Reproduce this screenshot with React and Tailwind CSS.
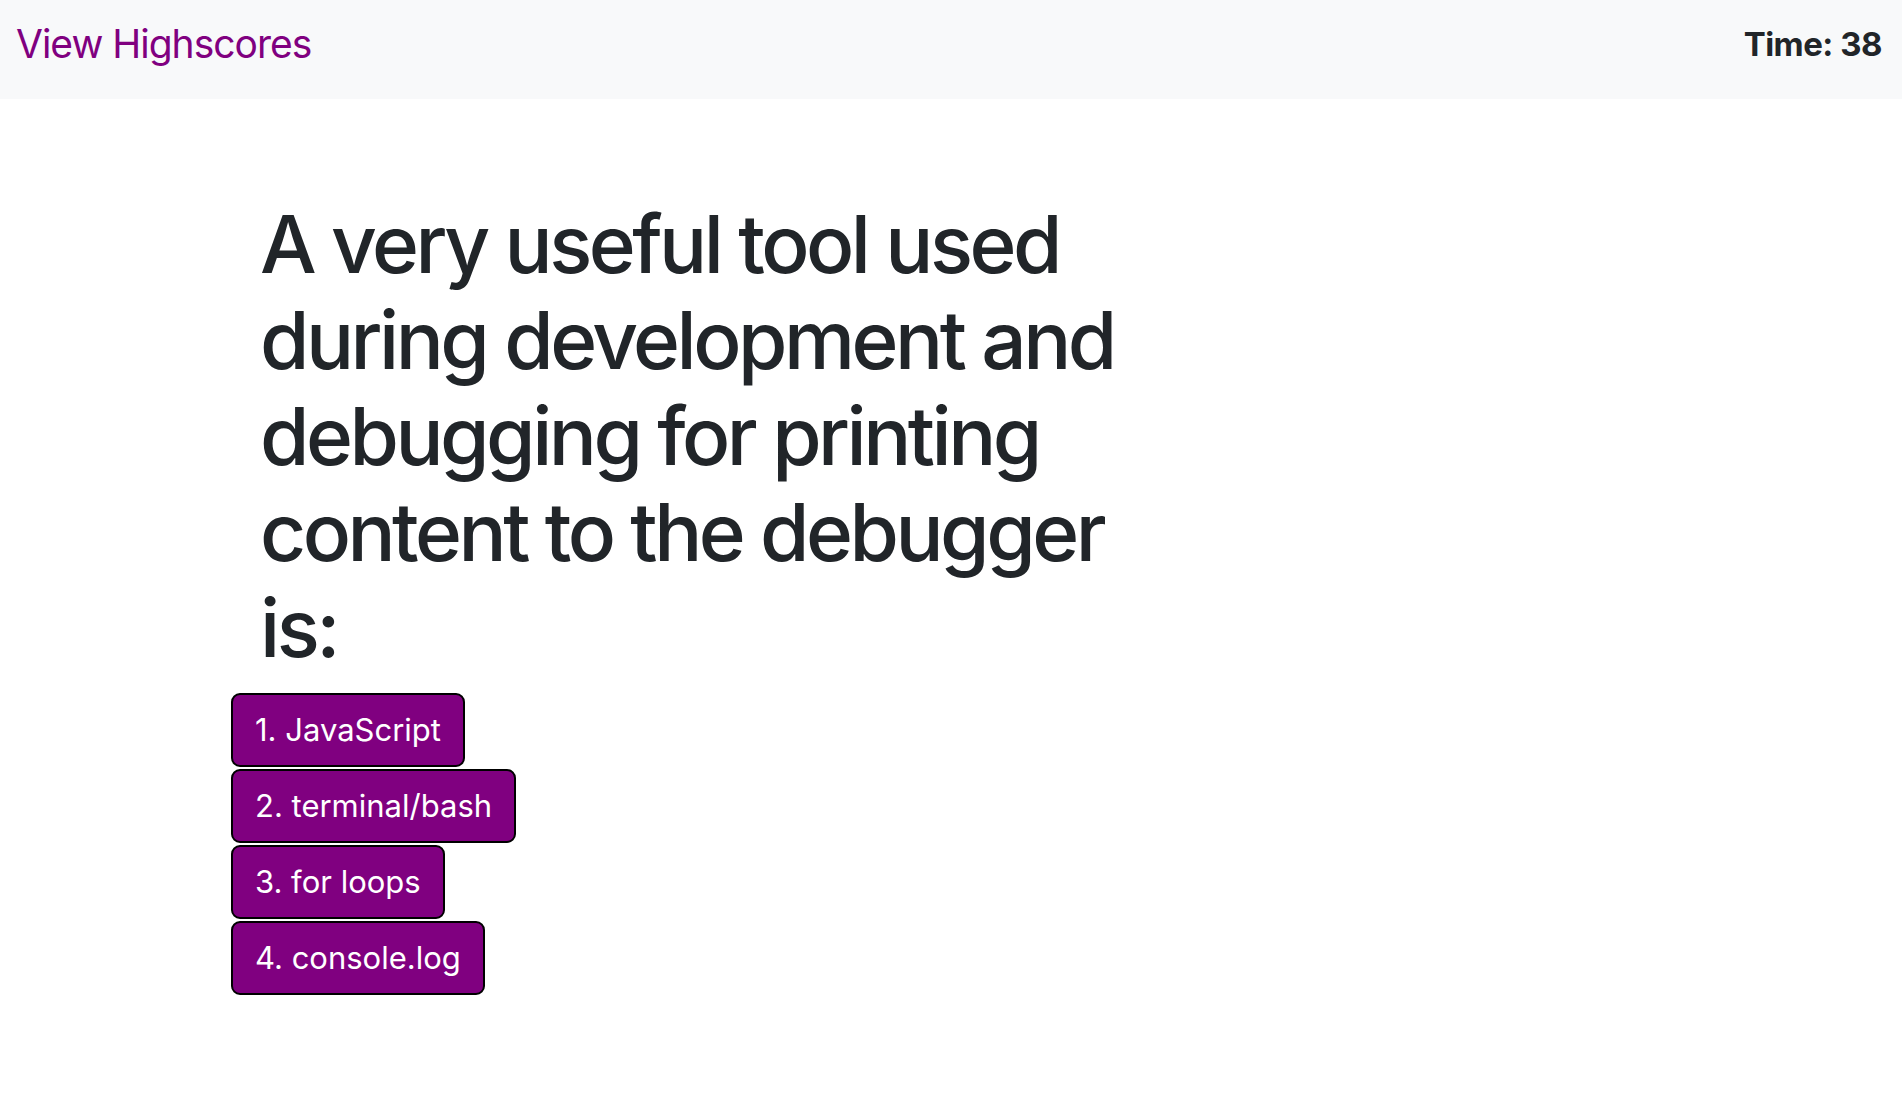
const choices = ["1. JavaScript", "2. terminal/bash", "3. for loops", "4. console.log"];

export default function App() {
    return (
        <div className="min-h-screen bg-white text-[#212529] font-['Inter',sans-serif]">
            <header className="h-[99px] bg-[#f8f9fa] flex items-start justify-between pl-4 pr-[20px] pt-[24px]">
                <a className="text-[39px] leading-none text-[#800080] tracking-[-1px] cursor-pointer">
                    View Highscores
                </a>
                <p className="mt-[4px] text-[33px] font-bold leading-none tracking-[-0.5px]">Time: 38</p>
            </header>

            <main className="pl-[231px] pt-[97px]">
                <h1 className="ml-[29px] w-[900px] text-[80px] leading-[96px] font-medium tracking-[-3.5px]">
                    A very useful tool used during development and debugging for printing content to the debugger is:
                </h1>

                <div className="mt-[17px] flex flex-col items-start gap-[2px]">
                    {choices.map((c) => (
                        <button
                            key={c}
                            className="bg-[#800080] text-white text-[31px] leading-[48px] px-[22px] py-[11px] border-2 border-black rounded-[9px] cursor-pointer"
                        >
                            {c}
                        </button>
                    ))}
                </div>
            </main>
        </div>
    );
}
